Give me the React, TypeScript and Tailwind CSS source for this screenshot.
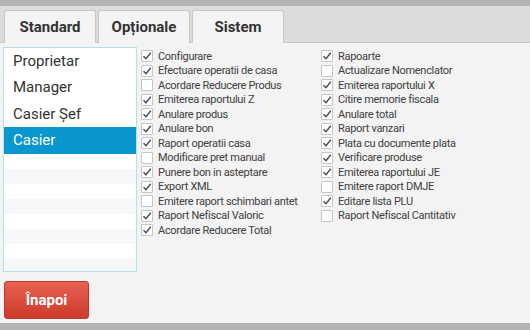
import React from "react";

const left: [string, boolean][] = [
  ["Configurare", true],
  ["Efectuare operatii de casa", true],
  ["Acordare Reducere Produs", false],
  ["Emiterea raportului Z", true],
  ["Anulare produs", true],
  ["Anulare bon", true],
  ["Raport operatii casa", true],
  ["Modificare pret manual", false],
  ["Punere bon in asteptare", true],
  ["Export XML", true],
  ["Emitere raport schimbari antet", false],
  ["Raport Nefiscal Valoric", true],
  ["Acordare Reducere Total", true],
];
const right: [string, boolean][] = [
  ["Rapoarte", true],
  ["Actualizare Nomenclator", false],
  ["Emiterea raportului X", true],
  ["Citire memorie fiscala", true],
  ["Anulare total", true],
  ["Raport vanzari", true],
  ["Plata cu documente plata", true],
  ["Verificare produse", true],
  ["Emiterea raportului JE", true],
  ["Emitere raport DMJE", false],
  ["Editare lista PLU", true],
  ["Raport Nefiscal Cantitativ", false],
];

function Check({ label, on }: { label: string; on: boolean }) {
  return (
    <div className="flex items-center h-[14.5px] gap-[5px]">
      <div className="w-[12px] h-[12px] border border-[#c6c6c6] bg-white rounded-[1px] flex items-center justify-center shrink-0">
        {on && (
          <svg width="10" height="10" viewBox="0 0 10 10">
            <path d="M1.5 5.2 L4 7.8 L8.8 1.8" fill="none" stroke="#4a4a4a" strokeWidth="1.4" />
          </svg>
        )}
      </div>
      <span className="text-[11px] text-[#404040] tracking-[-0.3px] whitespace-nowrap leading-none">{label}</span>
    </div>
  );
}

export default function App() {
  const roles = ["Proprietar", "Manager", "Casier Șef", "Casier"];
  return (
    <div className="w-[530px] h-[330px] flex flex-col bg-[#f3f3f3]" style={{ fontFamily: "Roboto, 'Noto Sans', sans-serif" }}>
      <div className="h-[6px] bg-[#b4b4b4]" />
      <div className="h-[37px] bg-[#dcdcdc] border-b border-[#c6c6c6] flex items-end pl-[4px] gap-[2px]">
        {["Standard", "Opționale", "Sistem"].map((t) => (
          <div key={t} className="w-[92px] h-[33px] bg-[#f4f4f4] border border-b-0 border-[#c8c8c8] rounded-t-[3px] flex items-center justify-center text-[15px] font-bold text-[#333] mb-[-1px]">
            {t}
          </div>
        ))}
      </div>
      <div className="flex-1 flex flex-col px-[3px] pt-[4px]">
        <div className="flex gap-[4px]">
          <div className="w-[134px] h-[225px] border border-[#b9dfe6] bg-white flex flex-col overflow-hidden">
            {roles.map((r) => (
              <div key={r} className={`h-[26.4px] shrink-0 flex items-center pl-[9px] text-[15px] ${r === "Casier" ? "bg-[#0a96ce] text-white" : "text-[#333]"}`}>
                {r}
              </div>
            ))}
            {Array.from({ length: 8 }).map((_, i) => (
              <div key={i} className={`h-[15px] shrink-0 ${i % 2 === 0 ? "bg-white" : "bg-[#f6f7f8]"}`} />
            ))}
          </div>
          <div className="flex pt-[2px]">
            <div className="w-[180px] flex flex-col">
              {left.map(([l, o]) => <Check key={l} label={l} on={o} />)}
            </div>
            <div className="flex flex-col">
              {right.map(([l, o]) => <Check key={l} label={l} on={o} />)}
            </div>
          </div>
        </div>
        <div className="mt-[9px] pl-[1px]">
          <button className="w-[85px] h-[38px] rounded-[3px] border border-[#c0392b] bg-gradient-to-b from-[#e8604f] to-[#cc3a2c] text-white font-bold text-[15px]">
            Înapoi
          </button>
        </div>
      </div>
      <div className="h-[7px] bg-[#b4b4b4]" />
    </div>
  );
}
